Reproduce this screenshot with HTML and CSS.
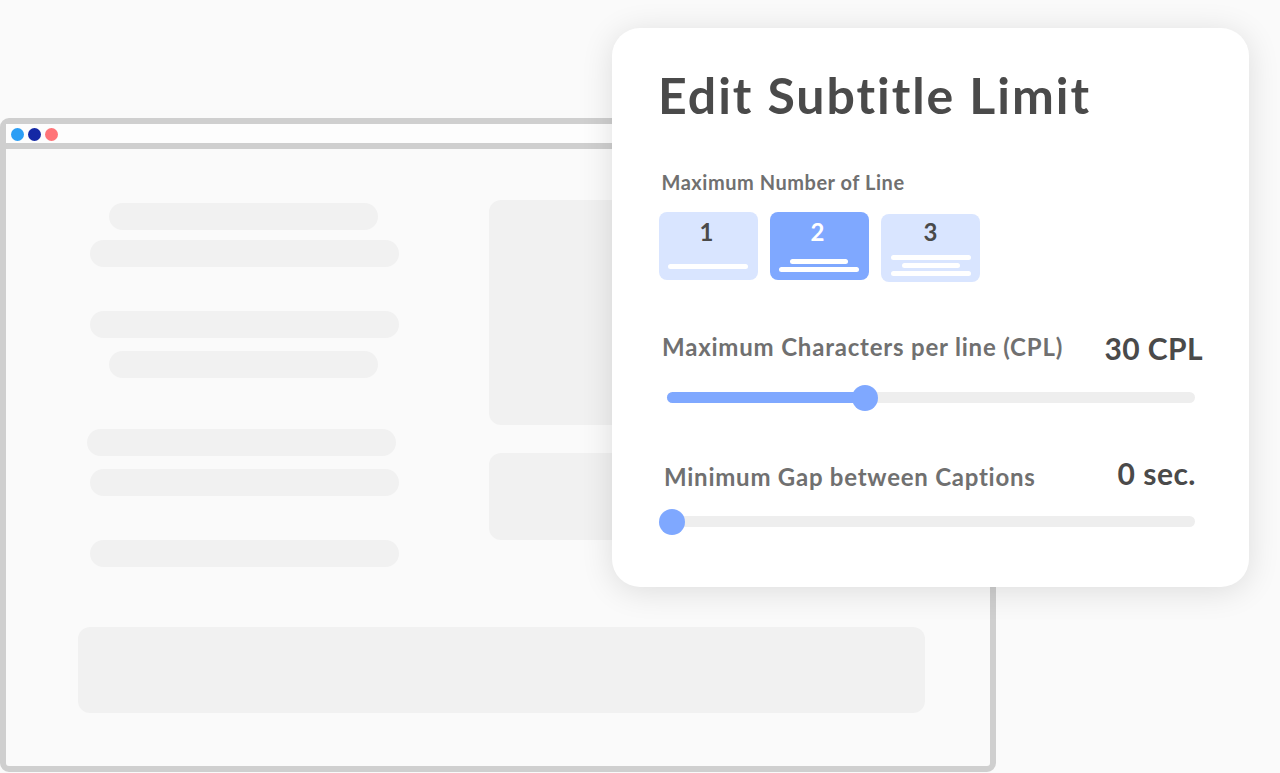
FILE: index.html
```html
<!DOCTYPE html>
<html lang="en">
<head>
<meta charset="utf-8">
<title>Edit Subtitle Limit</title>
<link rel="stylesheet" href="styles.css">
</head>
<body>
<div class="window">
  <div class="titlebar">
    <span class="dot dot-blue"></span>
    <span class="dot dot-navy"></span>
    <span class="dot dot-red"></span>
  </div>
  <div class="content">
    <div class="top">
      <div class="bars">
        <div class="bar bar-a"></div>
        <div class="bar bar-b"></div>
        <div class="bar bar-c"></div>
        <div class="bar bar-d"></div>
        <div class="bar bar-e"></div>
        <div class="bar bar-f"></div>
        <div class="bar bar-g"></div>
      </div>
      <div class="panels">
        <div class="panel panel-tall"></div>
        <div class="panel panel-short"></div>
      </div>
    </div>
    <div class="footer-block"></div>
  </div>
</div>
<section class="card">
  <h1 class="title">Edit Subtitle Limit</h1>
  <div class="label label-small">Maximum Number of Line</div>
  <div class="tiles">
    <div class="tile">
      <span class="num">1</span>
      <div class="lines"><i class="line"></i></div>
    </div>
    <div class="tile tile-on">
      <span class="num">2</span>
      <div class="lines"><i class="line line-short"></i><i class="line"></i></div>
    </div>
    <div class="tile tile-low">
      <span class="num">3</span>
      <div class="lines"><i class="line"></i><i class="line line-short"></i><i class="line"></i></div>
    </div>
  </div>
  <div class="row row-cpl">
    <span class="label label-cpl">Maximum Characters per line (CPL)</span>
    <span class="value value-cpl">30 CPL</span>
  </div>
  <div class="track track-cpl">
    <div class="fill"></div>
    <div class="thumb thumb-cpl"></div>
  </div>
  <div class="row row-gap">
    <span class="label label-gap">Minimum Gap between Captions</span>
    <span class="value value-gap">0 sec.</span>
  </div>
  <div class="track track-gap">
    <div class="thumb thumb-gap"></div>
  </div>
</section>
</body>
</html>
```
FILE: styles.css
```css
* { box-sizing: border-box; }
html, body { margin: 0; height: 100%; }
body {
  position: relative;
  width: 1280px;
  height: 773px;
  overflow: hidden;
  background: #fafafa;
  font-family: "Lato", "Liberation Sans", sans-serif;
}

/* background browser window */
.window {
  position: absolute;
  left: 0;
  top: 118px;
  width: 996px;
  height: 654px;
  border: 6px solid #cfcfcf;
  border-radius: 9px;
  background: #fafafa;
  display: flex;
  flex-direction: column;
}
.titlebar {
  height: 25px;
  flex: none;
  background: #fdfdfd;
  border-bottom: 6px solid #cfcfcf;
  display: flex;
  align-items: center;
  gap: 4px;
  padding: 1px 0 0 5px;
}
.dot { width: 13px; height: 13px; border-radius: 50%; }
.dot-blue { background: #2b9ef5; }
.dot-navy { background: #1428a5; }
.dot-red { background: #ff7478; }

.content { flex: 1; display: flex; flex-direction: column; }
.top { display: flex; height: 478px; flex: none; }
.bars { width: 483px; flex: none; display: flex; flex-direction: column; padding-top: 54px; }
.bar { height: 27px; border-radius: 13.5px; background: #f1f1f1; }
.bar-a { width: 269px; margin-left: 103px; }
.bar-b { width: 309px; margin-left: 84px; margin-top: 10px; }
.bar-c { width: 309px; margin-left: 84px; margin-top: 44px; }
.bar-d { width: 269px; margin-left: 103px; margin-top: 13px; }
.bar-e { width: 309px; margin-left: 81px; margin-top: 51px; }
.bar-f { width: 309px; margin-left: 84px; margin-top: 13px; }
.bar-g { width: 309px; margin-left: 84px; margin-top: 44px; }

.panels { flex: 1; display: flex; flex-direction: column; gap: 28px; padding-top: 51px; }
.panel { background: #f1f1f1; border-radius: 12px; width: 300px; }
.panel-tall { height: 225px; }
.panel-short { height: 87px; }
.footer-block {
  margin-left: 72px;
  width: 847px;
  height: 86px;
  border-radius: 12px;
  background: #f1f1f1;
}

/* floating card */
.card {
  position: absolute;
  left: 612px;
  top: 28px;
  width: 637px;
  height: 559px;
  background: #fff;
  border-radius: 28px;
  box-shadow: 0 4px 32px rgba(0, 0, 0, 0.12);
  padding: 35px 0 0 47px;
  color: #4a4a4a;
}
.title {
  margin: 0 0 0 -1px;
  font-size: 50px;
  line-height: 64px;
  font-weight: 700;
  letter-spacing: 1.95px;
}
.label {
  font-size: 24px;
  line-height: 30px;
  font-weight: 700;
  color: #707070;
  letter-spacing: 0.8px;
}
.label-small {
  font-size: 20px;
  line-height: 26px;
  letter-spacing: 0.53px;
  margin: 42px 0 0 2.5px;
}
.label-cpl { margin-top: 2px; }
.label-gap { letter-spacing: 0.75px; margin-top: 4px; }
.tiles { display: flex; gap: 12px; margin-top: 17px; }
.tile {
  width: 99px;
  height: 68px;
  border-radius: 8px;
  background: #d9e5ff;
  display: flex;
  flex-direction: column;
  align-items: center;
  padding: 6px 1px 0 0;
}
.tile-on { background: #7fa8ff; color: #fff; }
.tile-low { margin-top: 2px; padding: 4px 0 0; }
.num { font-size: 24px; line-height: 28px; font-weight: 700; margin-right: 3px; }
.tile-low .num { margin-right: 0; }
.lines {
  margin-top: auto;
  margin-bottom: 11px;
  display: flex;
  flex-direction: column;
  align-items: center;
  gap: 3px;
}
.tile-low .lines { margin-bottom: 6px; }
.tile-on .lines { margin-bottom: 8px; }
.line { display: block; width: 80px; height: 5px; border-radius: 2.5px; background: #fff; }
.line-short { width: 58px; }

.row { display: flex; justify-content: space-between; align-items: flex-start; }
.row-cpl { margin: 48px 0 0 3px; width: 541px; }
.row-gap { margin: 55px 0 0 5px; width: 532px; }
.value { font-weight: 700; color: #4a4a4a; }
.value-cpl { font-size: 30px; line-height: 36px; letter-spacing: 0.4px; }
.value-gap { font-size: 30px; line-height: 30px; letter-spacing: 0.5px; }

.track {
  position: relative;
  height: 11px;
  border-radius: 5.5px;
  background: #eeeeee;
}
.track-cpl { width: 528px; margin: 26px 0 0 8px; }
.track-gap { width: 530px; margin: 24px 0 0 6px; }
.fill { width: 198px; height: 100%; border-radius: 5.5px; background: #7fa8ff; }
.thumb {
  position: absolute;
  top: -7.5px;
  width: 26px;
  height: 26px;
  border-radius: 50%;
  background: #7fa8ff;
}
.thumb-cpl { left: 185px; }
.thumb-gap { left: -6px; }
```
